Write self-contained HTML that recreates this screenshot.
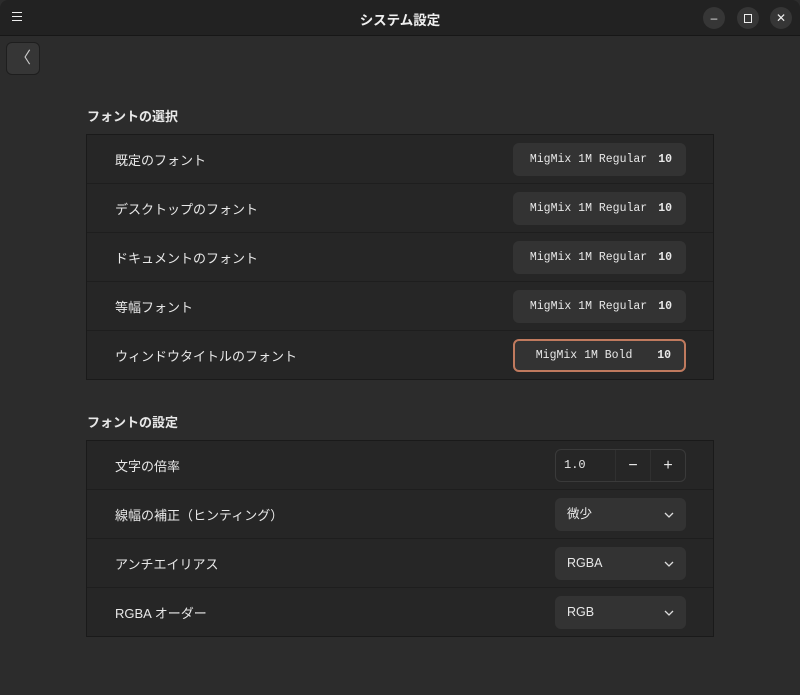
<!DOCTYPE html>
<html><head><meta charset="utf-8"><style>
*{box-sizing:border-box;margin:0;padding:0}
body{width:800px;height:695px;background:#2c2c2c;font-family:"Liberation Sans","Noto Sans CJK JP",sans-serif;color:#e8e8e8;font-size:13px;position:relative;overflow:hidden}
.hdr{position:absolute;left:0;top:0;width:800px;height:36px;background:#222;border-bottom:1px solid #171717;border-radius:8px 8px 0 0}
.title{position:absolute;left:0;right:0;top:9px;text-align:center;font-weight:bold;font-size:13.5px;color:#f0f0f0}
.wb{position:absolute;top:7px;width:22px;height:22px;border-radius:50%;background:#363636;color:#eee;font-size:12px;text-align:center;line-height:22px}
.back{position:absolute;left:6px;top:42px;width:34px;height:33px;border-radius:6px;background:#363636;border:1px solid #1e1e1e;color:#ccc;text-align:center;line-height:31px;font-size:16px}
.h{position:absolute;left:87px;font-weight:bold;font-size:13px}
.box{position:absolute;left:86px;width:628px;background:#262626;border:1px solid #1a1a1a}
.row{height:49px;border-bottom:1px solid #1e1e1e;position:relative}
.row:last-child{border-bottom:none;height:48px}
.lbl{position:absolute;left:28px;top:15px}
.fb{position:absolute;right:27px;top:8px;width:173px;height:33px;background:#333;border-radius:6px;font-family:"Liberation Mono",monospace;font-size:11.5px;line-height:33px;text-align:right;padding-right:14px;color:#e8e8e8}
.fb b{margin-left:11px}
.sel{border:2px solid #c07a5e;line-height:29px;padding-right:13px}
.dd{position:absolute;right:27px;top:8px;width:131px;height:33px;background:#333;border-radius:6px;line-height:33px;padding-left:12px;font-size:12.5px}
.dd svg{position:absolute;right:12px;top:14px}
.spin{position:absolute;right:27px;top:8px;width:131px;height:33px;border:1px solid #3a3a3a;border-radius:6px;font-family:"Liberation Mono",monospace;line-height:31px;padding-left:8px;font-size:12px}
.spin .m,.spin .p{position:absolute;top:0;width:35px;height:31px;text-align:center;border-left:1px solid #303030;font-family:"Liberation Sans";font-size:16px;font-weight:normal}
</style></head><body>
<div class="hdr">
<div style="position:absolute;left:12px;top:12px;width:10px"><div style="height:1px;background:#eee;margin-bottom:3px"></div><div style="height:1px;background:#eee;margin-bottom:3px"></div><div style="height:1px;background:#eee"></div></div>
<div class="title">システム設定</div>
<div class="wb" style="left:703px">–</div>
<div class="wb" style="left:737px"><div style="width:8px;height:9px;border:1.5px solid #eee;margin:7px auto"></div></div>
<div class="wb" style="left:770px">✕</div>
</div>
<div class="back">〈</div>
<div class="h" style="top:106px">フォントの選択</div>
<div class="box" style="top:134px">
<div class="row"><span class="lbl">既定のフォント</span><div class="fb">MigMix 1M Regular<b>10</b></div></div>
<div class="row"><span class="lbl">デスクトップのフォント</span><div class="fb">MigMix 1M Regular<b>10</b></div></div>
<div class="row"><span class="lbl">ドキュメントのフォント</span><div class="fb">MigMix 1M Regular<b>10</b></div></div>
<div class="row"><span class="lbl">等幅フォント</span><div class="fb">MigMix 1M Regular<b>10</b></div></div>
<div class="row"><span class="lbl">ウィンドウタイトルのフォント</span><div class="fb sel">MigMix 1M Bold&nbsp;&nbsp;<b>10</b></div></div>
</div>
<div class="h" style="top:412px">フォントの設定</div>
<div class="box" style="top:440px">
<div class="row"><span class="lbl">文字の倍率</span><div class="spin">1.0<div class="m" style="right:35px">−</div><div class="p" style="right:0">+</div></div></div>
<div class="row"><span class="lbl">線幅の補正（ヒンティング）</span><div class="dd">微少<svg width="10" height="6"><path d="M1 1l4 4 4-4" stroke="#ddd" fill="none" stroke-width="1.3"/></svg></div></div>
<div class="row"><span class="lbl">アンチエイリアス</span><div class="dd">RGBA<svg width="10" height="6"><path d="M1 1l4 4 4-4" stroke="#ddd" fill="none" stroke-width="1.3"/></svg></div></div>
<div class="row"><span class="lbl">RGBA オーダー</span><div class="dd">RGB<svg width="10" height="6"><path d="M1 1l4 4 4-4" stroke="#ddd" fill="none" stroke-width="1.3"/></svg></div></div>
</div>
</body></html>
